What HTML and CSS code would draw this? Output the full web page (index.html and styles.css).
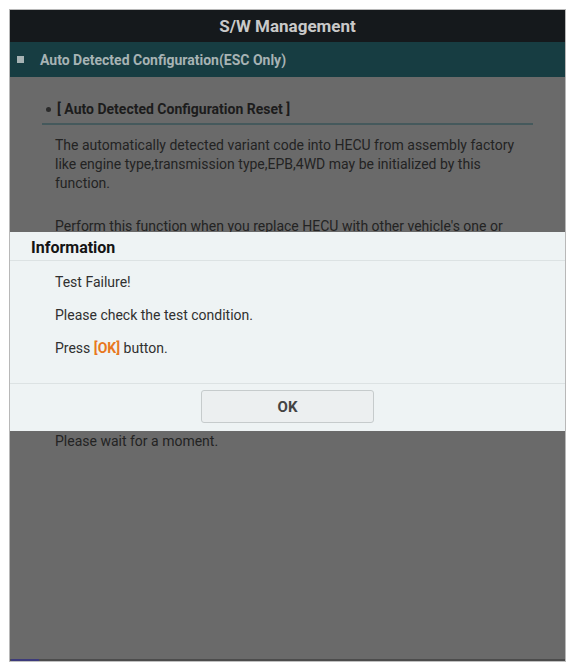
FILE: index.html
```html
<!DOCTYPE html>
<html>
<head>
<meta charset="utf-8">
<link rel="stylesheet" href="styles.css">
</head>
<body>
<div class="frame">
  <div class="titlebar">S/W Management</div>
  <div class="subbar"><span class="sq"></span>Auto Detected Configuration(ESC Only)</div>
  <div class="content">
    <div class="heading"><span class="dot"></span>[ Auto Detected Configuration Reset ]</div>
    <p class="para">The automatically detected variant code into HECU from assembly factory like engine type,transmission type,EPB,4WD may be initialized by this function.</p>
    <p class="para para2">Perform this function when you replace HECU with other vehicle's one or occur C1702 with MIL On. (ABS/EBD/ESP)</p>
    <p class="para wait">Please wait for a moment.</p>
  </div>
  <div class="indicator"></div>
  <div class="dialog">
    <div class="dlg-head">Information</div>
    <div class="dlg-body">
      <p>Test Failure!</p>
      <p>Please check the test condition.</p>
      <p>Press <b class="ok">[OK]</b> button.</p>
    </div>
    <div class="dlg-foot"><button class="btn">OK</button></div>
  </div>
</div>
</body>
</html>
```
FILE: styles.css
```css
* { box-sizing: border-box; }
html, body { margin: 0; padding: 0; background: #ffffff; }
body { font-family: Roboto, "Liberation Sans", Arial, sans-serif; }

.frame {
  position: relative;
  margin: 9px 0 0 9px;
  width: 557px;
  height: 653px;
  border: 1px solid #b8b8b8;
  border-bottom: 1px solid #c0c0c0;
  display: flex;
  flex-direction: column;
  background: #6a6a6a;
  overflow: hidden;
}
.titlebar {
  height: 32px;
  background: #15191c;
  color: #c9c9c9;
  font-weight: bold;
  font-size: 17px;
  display: flex;
  align-items: center;
  justify-content: center;
  padding-bottom: 1px;
}
.subbar {
  height: 35px;
  background: #173d42;
  color: #a7b3b4;
  font-weight: bold;
  font-size: 14px;
  display: flex;
  align-items: center;
  padding-left: 7px;
}
.sq {
  width: 7px; height: 7px;
  background: #a7b3b4;
  margin-right: 16px;
}
.content {
  flex: 1;
  background: #6a6a6a;
  padding: 24px 32px 0 45px;
  border-bottom: 2px solid #4c4c4c;
}
.heading {
  color: #1c1c1c;
  font-weight: bold;
  font-size: 14px;
  display: flex;
  align-items: center;
  padding-bottom: 6px;
  border-bottom: 2px solid #45595c;
  margin-left: -13px;
  padding-left: 4px;
}
.dot {
  width: 5px; height: 5px; border-radius: 50%;
  background: #2b2b2b;
  margin-right: 6px;
}
.para {
  margin: 11px 0 0 0;
  color: #232323;
  font-size: 14px;
  line-height: 19px;
}
.para2 { margin-top: 24px; }
.wait { margin-top: 177px; }

.indicator {
  position: absolute;
  left: 1px; bottom: 0;
  width: 28px; height: 2px;
  background: #3c3a7a;
}

.dialog {
  position: absolute;
  left: 0; right: 0;
  top: 222px;
  background: #eef3f4;
}
.dlg-head {
  height: 29px;
  padding-left: 21px;
  padding-top: 2px;
  display: flex;
  align-items: center;
  font-weight: bold;
  font-size: 16px;
  color: #141414;
  border-bottom: 1px solid #dce2e3;
}
.dlg-body {
  padding: 6px 0 17px 45px;
  border-bottom: 1px solid #dce2e3;
}
.dlg-body p {
  margin: 0;
  height: 33px;
  line-height: 30px;
  font-size: 14px;
  color: #303030;
}
.ok { color: #e8781f; }
.dlg-foot {
  display: flex;
  justify-content: center;
  padding: 6px 0 8px 0;
}
.btn {
  width: 173px;
  height: 33px;
  background: #eceff0;
  border: 1px solid #c6cbcc;
  border-radius: 3px;
  font-family: Roboto, "Liberation Sans", Arial, sans-serif;
  font-weight: bold;
  font-size: 15px;
  color: #444;
}
```
